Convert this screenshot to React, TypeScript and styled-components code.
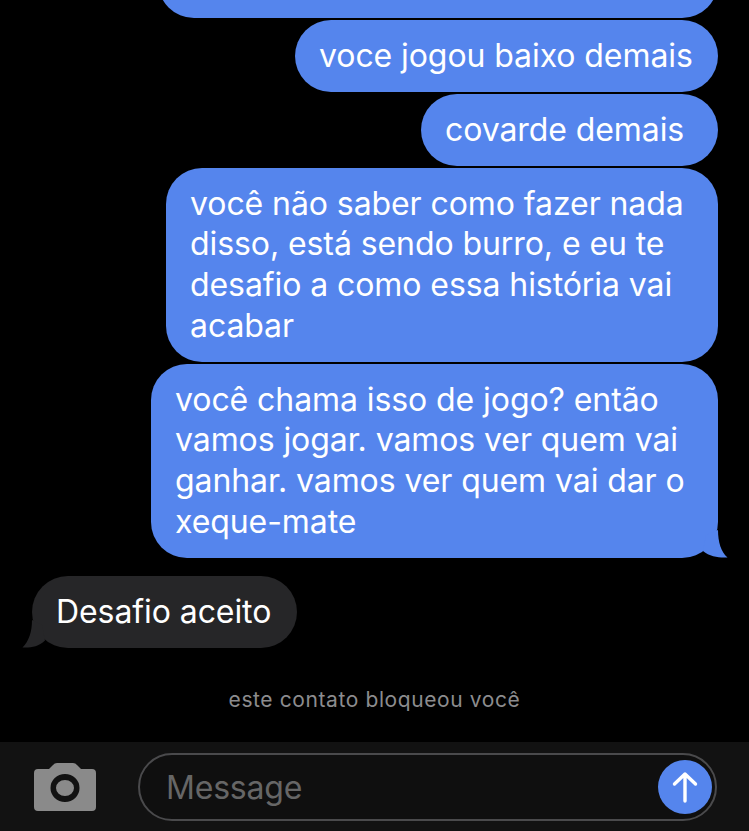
import React from "react";
import styled, { createGlobalStyle } from "styled-components";

const Global = createGlobalStyle`
  html, body { margin: 0; padding: 0; background: #000; }
  * { box-sizing: border-box; }
`;

const Page = styled.div`
  width: 749px;
  height: 831px;
  display: flex;
  flex-direction: column;
  overflow: hidden;
  background: #000;
  font-family: Inter, "Liberation Sans", sans-serif;
`;

const Thread = styled.div`
  flex: 1;
  min-height: 0;
  display: flex;
  flex-direction: column;
  justify-content: flex-end;
  overflow: hidden;
`;

const Bubble = styled.div<{ $width: number; $incoming?: boolean; $gapAfter?: number }>`
  position: relative;
  flex: none;
  width: ${(p) => p.$width}px;
  min-height: 72px;
  padding: 15.5px 0 15.5px 24px;
  margin-left: ${(p) => (p.$incoming ? "32px" : "auto")};
  margin-right: ${(p) => (p.$incoming ? "0" : "31px")};
  margin-bottom: ${(p) => p.$gapAfter ?? 2}px;
  border-radius: 36px;
  background: ${(p) => (p.$incoming ? "#262628" : "#5585ED")};
  color: #fff;
  font-size: 32px;
  line-height: 40.75px;
  letter-spacing: -0.08px;
  white-space: nowrap;
`;

const Tail = styled.svg<{ $incoming?: boolean }>`
  position: absolute;
  bottom: 0;
  width: 36px;
  height: 28px;
  ${(p) => (p.$incoming ? "left: -10px;" : "right: -10px;")}
`;

const Notice = styled.div`
  flex: none;
  height: 94px;
  padding-top: 40px;
  text-align: center;
  color: #8c8c8e;
  font-size: 21px;
  line-height: 24px;
  letter-spacing: 0.6px;
`;

const Composer = styled.div`
  flex: none;
  height: 89px;
  display: flex;
  align-items: flex-start;
  padding: 11px 32px 0 34px;
  background: #121212;
`;

const CameraButton = styled.div`
  width: 62px;
  height: 48px;
  margin-top: 10px;
  margin-right: 42px;
  flex: none;
  color: #8a8a8a;
`;

const Field = styled.div`
  flex: 1;
  height: 68px;
  display: flex;
  align-items: center;
  justify-content: space-between;
  padding: 0 3px 0 26px;
  border: 2px solid #4a4a4c;
  border-radius: 34px;
  background: #0f0f0f;
`;

const Placeholder = styled.span`
  margin-top: 2px;
  color: #666666;
  font-size: 32px;
  line-height: 40px;
  letter-spacing: -0.2px;
`;

const SendButton = styled.div`
  width: 54px;
  height: 54px;
  flex: none;
  display: flex;
  align-items: center;
  justify-content: center;
  border-radius: 50%;
  background: #5585ED;
`;

export default function App() {
  return (
    <Page>
      <Global />
      <Thread>
        <Bubble $width={560} />
        <Bubble $width={423}>voce jogou baixo demais</Bubble>
        <Bubble $width={297}>covarde demais</Bubble>
        <Bubble $width={552}>
          você não saber como fazer nada
          <br />
          disso, está sendo burro, e eu te
          <br />
          desafio a como essa história vai
          <br />
          acabar
        </Bubble>
        <Bubble $width={567} $gapAfter={18}>
          você chama isso de jogo? então
          <br />
          vamos jogar. vamos ver quem vai
          <br />
          ganhar. vamos ver quem vai dar o
          <br />
          xeque-mate
          <Tail viewBox="0 0 36 28" aria-hidden="true">
            <path d="M26 0 C26 12 29 22 35.500 27.500 C28 28 18 27 11 21 L14 5 Z" fill="#5585ED" />
          </Tail>
        </Bubble>
        <Bubble $width={265} $incoming $gapAfter={0}>
          Desafio aceito
          <Tail $incoming viewBox="0 0 36 28" aria-hidden="true">
            <path d="M10 0 C10 12 7 21 0.500 27.500 C8 28 16 27 23 20.500 L20 5 Z" fill="#262628" />
          </Tail>
        </Bubble>
        <Notice>este contato bloqueou você</Notice>
      </Thread>
      <Composer>
        <CameraButton>
          <svg width="62" height="48" viewBox="0 0 62 48" aria-hidden="true">
            <path
              fillRule="evenodd"
              fill="currentColor"
              d="M4 6 H15 L19 2 Q20.500 0 23 0 H39 Q41.500 0 43 2 L47 6 H58 Q62 6 62 10 V44 Q62 48 58 48 H4 Q0 48 0 44 V10 Q0 6 4 6 Z M31 11 A14.500 14 0 1 0 31 39 A14.500 14 0 1 0 31 11 Z M31 17 A9 8 0 1 1 31 33 A9 8 0 1 1 31 17 Z"
            />
          </svg>
        </CameraButton>
        <Field>
          <Placeholder>Message</Placeholder>
          <SendButton>
            <svg width="30" height="32" viewBox="0 0 30 32" aria-hidden="true">
              <path d="M15 30 V3 M4.500 13 L15 3 L25.500 13" fill="none" stroke="#fff" strokeWidth="3.4" strokeLinecap="round" strokeLinejoin="round" />
            </svg>
          </SendButton>
        </Field>
      </Composer>
    </Page>
  );
}
